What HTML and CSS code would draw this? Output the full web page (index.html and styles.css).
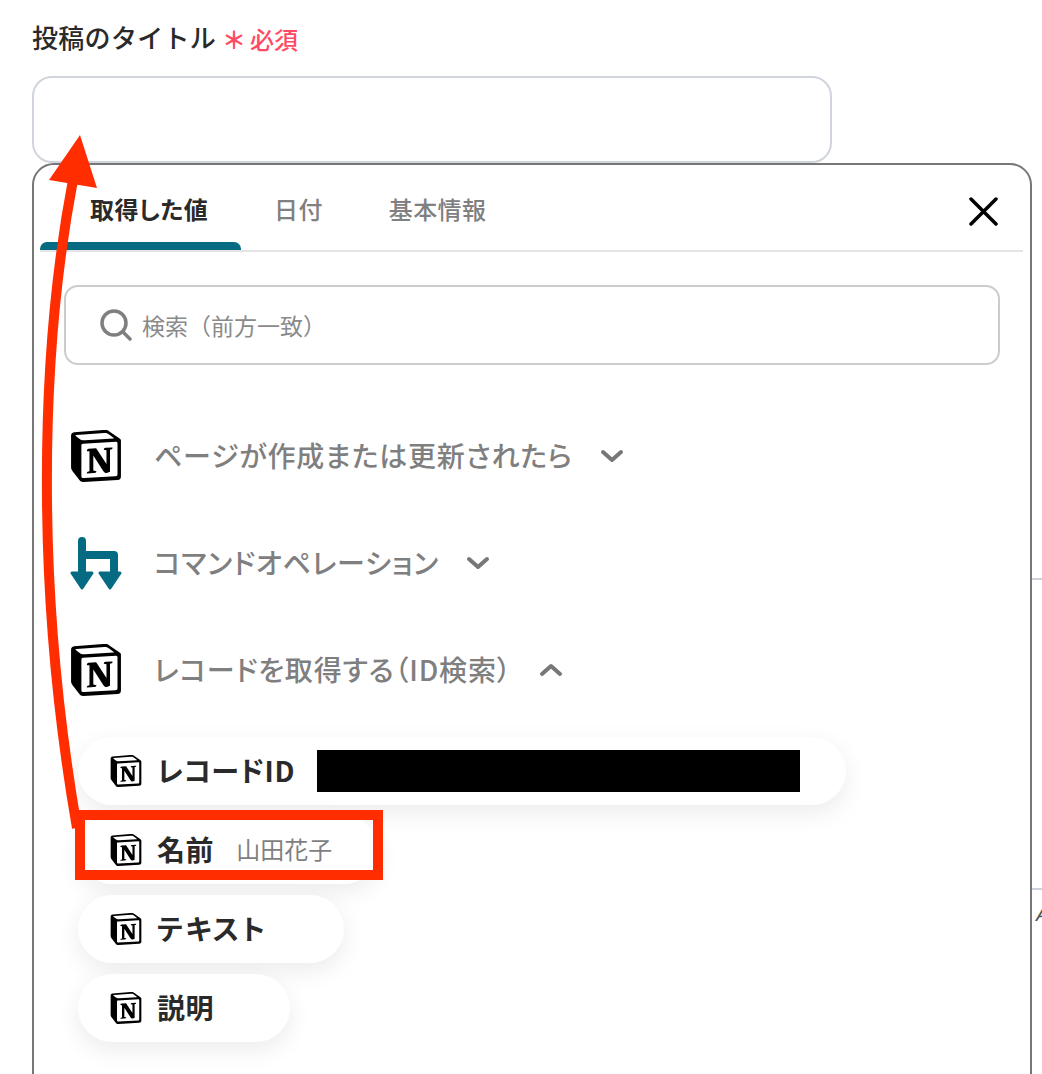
FILE: index.html
```html
<!DOCTYPE html>
<html lang="ja">
<head>
<meta charset="utf-8">
<title>投稿のタイトル</title>
<link rel="stylesheet" href="styles.css">
</head>
<body>
<svg class="defs" width="0" height="0" aria-hidden="true">
  <symbol id="notion" viewBox="0 0 24 24">
    <path fill="#fff" d="M3 3l15-1.5 4 3v17l-16 1-3-4z"/>
    <path d="M4.459 4.208c.746.606 1.026.56 2.428.466l13.215-.793c.28 0 .047-.28-.046-.326L17.86 1.968c-.42-.326-.981-.7-2.055-.607L3.01 2.295c-.466.046-.56.28-.374.466zm.793 3.08v13.904c0 .747.373 1.027 1.214.98l14.523-.84c.841-.046.935-.56.935-1.167V6.354c0-.606-.233-.933-.748-.887l-15.177.887c-.56.047-.747.327-.747.933zm14.337.745c.093.42 0 .84-.42.888l-.7.14v10.264c-.608.327-1.168.514-1.635.514-.748 0-.935-.234-1.495-.933l-4.577-7.186v6.952L12.21 19s0 .84-1.168.84l-3.222.186c-.093-.186 0-.653.327-.746l.84-.233V9.854L7.822 9.76c-.094-.42.14-1.026.793-1.073l3.456-.233 4.764 7.279v-6.44l-1.215-.139c-.093-.514.28-.887.747-.933zM1.936 1.035l13.31-.98c1.634-.14 2.055-.047 3.082.7l4.249 2.986c.7.513.934.653.934 1.213v16.378c0 1.026-.373 1.634-1.68 1.726l-15.458.934c-.98.047-1.448-.093-1.962-.747l-3.129-4.06c-.56-.747-.793-1.306-.793-1.96V2.667c0-.839.374-1.54 1.447-1.632z"/>
  </symbol>
</svg>

<div class="page">
  <div class="field-label">
    <span class="label-text">投稿のタイトル</span>
    <span class="required"><span class="star">＊</span>必須</span>
  </div>
  <div class="title-input"></div>

  <section class="panel">
    <div class="tabs">
      <div class="tab tab-first active">取得した値</div>
      <div class="tab">日付</div>
      <div class="tab">基本情報</div>
      <svg class="close" width="30" height="30" viewBox="0 0 30 30"><path d="M3 3l25 25M28 3L3 28"/></svg>
    </div>

    <div class="search">
      <svg class="search-icon" width="32" height="32" viewBox="0 0 32 32"><circle cx="14" cy="14" r="12"/><path d="M23 23L30 30"/></svg>
      <span class="search-text">検索（前方一致）</span>
    </div>

    <div class="source">
      <svg class="source-icon"><use href="#notion"/></svg>
      <span class="source-name">ページが作成または更新されたら</span>
      <svg class="chev" width="24" height="14" viewBox="0 0 24 14"><path d="M3 3l9 8 9-8"/></svg>
    </div>
    <div class="source source-second">
      <svg class="source-icon" viewBox="0 0 52 54"><g class="yoom"><path d="M12 5v32M12 19h32v18"/></g><path class="yoom-head" d="M2 37h20L12 52zM30 37h20L40 52z"/></svg>
      <span class="source-name">コマンドオペレーション</span>
      <svg class="chev" width="24" height="14" viewBox="0 0 24 14"><path d="M3 3l9 8 9-8"/></svg>
    </div>
    <div class="source source-third">
      <svg class="source-icon"><use href="#notion"/></svg>
      <span class="source-name">レコードを取得する（ID検索）</span>
      <svg class="chev" width="24" height="14" viewBox="0 0 24 14"><path d="M3 11l9-8 9 8"/></svg>
    </div>

    <div class="chips">
      <div class="chip">
        <svg class="chip-icon"><use href="#notion"/></svg>
        <span class="chip-name">レコードID</span>
        <span class="redacted"></span>
      </div>
      <div class="chip">
        <svg class="chip-icon"><use href="#notion"/></svg>
        <span class="chip-name">名前</span>
        <span class="chip-value">山田花子</span>
      </div>
      <div class="chip chip-plain">
        <svg class="chip-icon"><use href="#notion"/></svg>
        <span class="chip-name chip-name-wide">テキスト</span>
      </div>
      <div class="chip chip-plain">
        <svg class="chip-icon"><use href="#notion"/></svg>
        <span class="chip-name">説明</span>
      </div>
    </div>
  </section>

  <div class="behind behind-a"></div>
  <div class="behind behind-b"></div>
  <span class="behind-letter">A</span>

  <div class="highlight"></div>
  <svg class="arrow" width="1042" height="1074" viewBox="0 0 1042 1074">
    <path class="arrow-shaft" d="M73 180C52 290 46 400 47 500C48 620 60 730 77 828"/>
    <path class="arrow-head" d="M80 135L97 188L49 180z"/>
  </svg>
</div>
</body>
</html>
```

FILE: styles.css
```css
* { box-sizing: border-box; }
html, body { margin: 0; padding: 0; background: #fff; }
body {
  font-family: "Noto Sans CJK JP", "Noto Sans", sans-serif;
  color: #2a2a2a;
}
.defs { position: absolute; }
.page {
  position: relative;
  width: 1042px;
  height: 1074px;
  overflow: hidden;
  padding: 18px 0 0 32px;
}
.field-label {
  display: flex;
  align-items: center;
  height: 38px;
  margin-bottom: 20px;
}
.label-text { font-size: 26px; letter-spacing: .3px; font-weight: 500; line-height: 38px; }
.required {
  display: flex;
  align-items: center;
  margin: 3px 0 0 6px;
  font-size: 24px;
  font-weight: 500;
  color: #ff4a63;
}
.star { margin-right: 4px; font-weight: 700; }
.title-input {
  width: 800px;
  height: 87px;
  border: 2px solid #d0d5dd;
  border-radius: 20px;
  background: #fff;
}
.panel {
  width: 1000px;
  height: 1000px;
  border: 2px solid #777;
  border-radius: 22px;
  background: #fff;
  padding: 0 7px 0 6px;
}
.tabs {
  position: relative;
  display: flex;
  height: 87px;
  border-bottom: 2px solid #e4e4e4;
}
.tab {
  padding: 0 33px;
  height: 85px;
  line-height: 87px;
  font-size: 24px;
  letter-spacing: .4px;
  font-weight: 500;
  color: #808080;
}
.tab-first { width: 201px; padding-left: 50px; padding-right: 0; }
.tab.active {
  position: relative;
  color: #2a2a2a;
  font-weight: 700;
  font-feature-settings: "palt";
}
.tab.active::after {
  content: "";
  position: absolute;
  left: 0;
  right: 0;
  bottom: 0;
  height: 8px;
  background: #056b82;
  border-radius: 7px 7px 0 0;
}
.close {
  position: absolute;
  right: 25px;
  top: 31px;
  fill: none;
  stroke: #000;
  stroke-width: 3.5;
  stroke-linecap: round;
}
.search {
  display: flex;
  align-items: center;
  width: 936px;
  height: 80px;
  margin: 33px 0 0 24px;
  padding-left: 34px;
  border: 2px solid #ccc;
  border-radius: 14px;
}
.search-icon { fill: none; stroke: #7f7f7f; stroke-width: 3.5; stroke-linecap: round; }
.search-text { margin-left: 10px; font-size: 23px; line-height: 30px; padding-bottom: 1px; color: #8a8a8a; }
.source {
  display: flex;
  align-items: center;
  height: 52px;
  margin: 65px 0 0 30px;
}
.source-second { height: 54px; margin-top: 54px; }
.source-third { margin-top: 54px; }
.source-icon { width: 52px; height: 52px; flex: none; }
.source-second .source-icon { height: 54px; }
.yoom { fill: none; stroke: #056b82; stroke-width: 8; stroke-linecap: round; stroke-linejoin: round; }
.yoom-head { fill: #056b82; stroke: #056b82; stroke-width: 3; stroke-linejoin: round; }
.source-name {
  margin-left: 32px;
  padding-bottom: 3px;
  font-size: 28px;
  font-feature-settings: "palt";
  letter-spacing: .8px;
  font-weight: 500;
  color: #7f7f7f;
}
.chev {
  margin-left: 27px;
  fill: none;
  stroke: #777;
  stroke-width: 4;
  stroke-linecap: round;
  stroke-linejoin: round;
}
.chips {
  display: flex;
  flex-direction: column;
  align-items: flex-start;
  gap: 11px;
  margin: 41px 0 0 38px;
}
.chip {
  display: flex;
  align-items: center;
  height: 68px;
  padding: 0 46px 0 32px;
  border-radius: 34px;
  background: #fff;
  box-shadow: 0 8px 24px rgba(0, 0, 0, .08);
}
.chip-plain { padding-right: 76px; }
.chip-icon { width: 32px; height: 32px; flex: none; }
.chip-name {
  margin-left: 15px;
  padding-bottom: 3px;
  font-size: 28px;
  font-feature-settings: "palt";
  letter-spacing: .6px;
  font-weight: 700;
  color: #2a2a2a;
}
.chip-name-wide { letter-spacing: 2.5px; }
.chip-value { margin-left: 22px; padding-bottom: 3px; font-size: 24px; color: #7f7f7f; }
.redacted { width: 483px; height: 42px; margin-left: 22px; background: #000; }
.behind {
  position: absolute;
  left: 1032px;
  width: 10px;
  height: 2px;
  background: #ccd2da;
}
.behind-a { top: 578px; }
.behind-b { top: 888px; }
.behind-letter {
  position: absolute;
  left: 1036px;
  top: 900px;
  font-family: "Liberation Sans", sans-serif;
  font-size: 20px;
  line-height: 28px;
  font-style: italic;
  color: #555;
}
.highlight {
  position: absolute;
  left: 75px;
  top: 810px;
  width: 308px;
  height: 70px;
  border: 10px solid #ff2d00;
}
.arrow { position: absolute; left: 0; top: 0; pointer-events: none; }
.arrow-shaft { fill: none; stroke: #ff2d00; stroke-width: 10; }
.arrow-head { fill: #ff2d00; }
```
